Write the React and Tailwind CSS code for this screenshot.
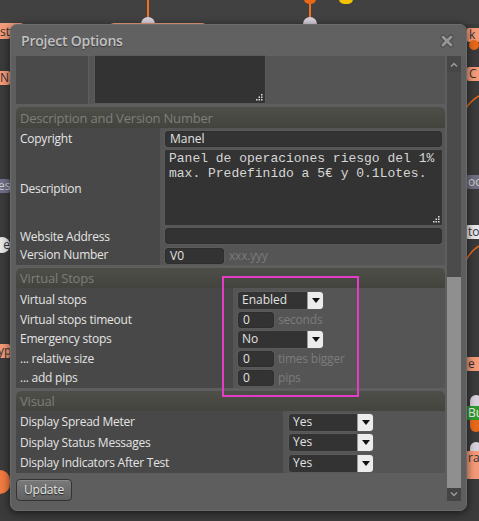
import React from "react";

const font = { fontFamily: '"Open Sans", "Noto Sans", sans-serif' };

function Tag({ className, children }) {
  return (
    <div
      className={
        "absolute text-[12px] leading-[14px] px-[2px] rounded-[2px] overflow-hidden whitespace-nowrap " +
        className
      }
    >
      {children}
    </div>
  );
}

function Input({ value, className }) {
  return (
    <div
      className={
        "h-[16px] rounded-[3px] bg-[#333333] border border-[#2e2e2e] shadow-[0_0_0_1px_#5a5a5a] px-[4px] text-[12px] leading-[14px] text-[#e2e2e2] " +
        (className || "")
      }
    >
      {value}
    </div>
  );
}

function Select({ value, className }) {
  return (
    <div
      className={
        "h-[17px] flex rounded-[3px] bg-[#333333] shadow-[0_0_0_1px_#5a5a5a] " +
        (className || "")
      }
    >
      <div className="flex-1 px-[4px] text-[12px] leading-[16px] text-[#e2e2e2]">
        {value}
      </div>
      <div className="w-[16px] h-[17px] bg-[#ececec] rounded-r-[3px] border-l border-[#999] flex items-center justify-center">
        <svg width="8" height="5" viewBox="0 0 8 5">
          <path d="M0 0h8L4 5z" fill="#111" />
        </svg>
      </div>
    </div>
  );
}

function Label({ children }) {
  return (
    <div className="px-[4px] text-[12px] leading-[16px] tracking-[-0.25px] text-[#e4e4e4] flex items-center">
      {children}
    </div>
  );
}

function Section({ title, tall, children }) {
  return (
    <div className="rounded-t-[5px] overflow-hidden">
      <div
        className={
          "bg-gradient-to-b from-[#4e4e49] to-[#44443f] px-[4px] text-[13px] tracking-[-0.2px] text-[#7e7e7a] " +
          (tall ? "h-[21px] leading-[22px]" : "h-[20px] leading-[20px]")
        }
      >
        {title}
      </div>
      {children}
    </div>
  );
}

export default function App() {
  return (
    <div
      className="relative w-[479px] h-[521px] overflow-hidden bg-[#3b3b3b]"
      style={font}
    >
      {/* canvas behind */}
      <div className="absolute left-0 top-0 w-[479px] h-[24px] bg-[#414141]" />
      <div className="absolute left-[147px] top-0 w-[2px] h-[20px] bg-[#f07020]" />
      <div className="absolute left-[141px] top-[17px] w-[14px] h-[10px] rounded-t-full bg-[#d8d0dc]" />
      <div className="absolute left-[309px] top-0 w-[2px] h-[20px] bg-[#f07020]" />
      <div className="absolute left-[304px] top-[-6px] w-[12px] h-[10px] rounded-full bg-[#e86818]" />
      <div className="absolute left-[303px] top-[17px] w-[14px] h-[10px] rounded-t-full bg-[#d8d0dc]" />
      <div className="absolute left-[339px] top-[-6px] w-[14px] h-[10px] rounded-full bg-[#f2c200]" />
      <div className="absolute left-[108px] top-[23px] w-[100px] h-[6px] rounded-t-[6px] bg-[#f0a080]" />
      <div className="absolute left-0 top-[23px] w-[26px] h-[6px] rounded-tr-[6px] bg-[#f0a080]" />
      <Tag className="left-[-2px] top-[25px] w-[12px] bg-[#f49a78] text-[#333]">sta</Tag>
      <Tag className="left-[-2px] top-[71px] w-[12px] bg-[#f49a78] text-[#333]">Na</Tag>
      <Tag className="left-[-4px] top-[179px] w-[14px] bg-[#6e6e88] text-[#ccc]">es</Tag>
      <div className="absolute left-[-6px] top-[237px] w-[16px] h-[16px] rounded-full bg-[#e6e6e6] text-[12px] leading-[16px] text-right text-[#333]">e</div>
      <Tag className="left-[-4px] top-[344px] w-[14px] bg-[#f49a78] text-[#333]">yp</Tag>
      <div className="absolute left-[-10px] top-[470px] w-[20px] h-[24px] rounded-full bg-[#f07a40]" />
      <Tag className="left-[467px] top-[28px] w-[14px] bg-[#f49a78] text-[#333]">k I</Tag>
      <div className="absolute left-[469px] top-[40px] w-[10px] h-[10px] rounded-full bg-[#e86818]" />
      <Tag className="left-[467px] top-[67px] w-[14px] bg-[#f49a78] text-[#333]">C</Tag>
      <Tag className="left-[466px] top-[175px] w-[15px] bg-[#6e6e80] text-[#ccc]">oo</Tag>
      <Tag className="left-[466px] top-[225px] w-[15px] bg-[#e8e8e8] text-[#333]">to</Tag>
      <Tag className="left-[466px] top-[357px] w-[15px] bg-[#f49a78] text-[#333]">e</Tag>
      <div className="absolute left-[470px] top-[395px] w-[12px] h-[12px] rounded-t-full bg-[#d8d0dc]" />
      <Tag className="left-[466px] top-[406px] w-[15px] bg-[#2f9a30] text-[#eee]">Bu</Tag>
      <div className="absolute left-[470px] top-[420px] w-[12px] h-[12px] rounded-b-full bg-[#e86818]" />
      <div className="absolute left-[470px] top-[442px] w-[12px] h-[12px] rounded-t-full bg-[#d8d0dc]" />
      <Tag className="left-[466px] top-[451px] w-[15px] h-[28px] bg-[#f49a78] text-[#333] whitespace-normal">ra tn</Tag>
      <svg className="absolute left-[464px] top-[80px]" width="15" height="320" viewBox="0 0 15 320">
        <path d="M2 28 Q8 20 15 16" stroke="#e86818" fill="none" strokeWidth="1.5" />
        <path d="M2 180 Q8 170 15 166" stroke="#e86818" fill="none" strokeWidth="1.5" />
      </svg>

      {/* dialog window */}
      <div className="absolute left-[10px] top-[24px] w-[457px] h-[487px] rounded-[7px] bg-[#5e5e5e] border border-[#6c6c6c] shadow-[0_2px_8px_rgba(0,0,0,0.6)] flex flex-col">
        <div className="h-[31px] flex items-center justify-between pl-[10px] pr-[12px] bg-[#616161] rounded-t-[7px]">
          <div className="text-[14px] font-semibold tracking-[-0.2px] text-[#c2c2c2] [text-shadow:0_1px_1px_#3a3a3a]">
            Project Options
          </div>
          <svg width="14" height="14" viewBox="0 0 14 14">
            <path d="M3 3L11 11M11 3L3 11" stroke="#4a4a4a" strokeWidth="5" strokeLinecap="round" />
            <path d="M3 3L11 11M11 3L3 11" stroke="#959595" strokeWidth="3" strokeLinecap="round" />
          </svg>
        </div>

        <div className="flex pl-[5px] pr-[4px] gap-[2px] h-[445px]">
          <div className="w-[429px] flex flex-col gap-[3px]">
            {/* partially scrolled row */}
            <div className="h-[49px] flex">
              <div className="w-[72px] bg-[#4a4a4a]" />
              <div className="flex-1 bg-[#555555] pl-[6px] border-l border-[#5e5e5e]">
                <div className="relative w-[170px] h-[47px] bg-[#333333] shadow-[0_0_0_1px_#5a5a5a]">
                  <Grip />
                </div>
              </div>
            </div>

            <Section title="Description and Version Number" tall>
              <div className="grid grid-cols-[144px_1fr]">
                <div className="bg-[#484848] flex flex-col">
                  <div className="h-[21px] flex"><Label>Copyright</Label></div>
                  <div className="h-[79px] flex"><Label>Description</Label></div>
                  <div className="h-[17px] flex"><Label>Website Address</Label></div>
                  <div className="h-[19px] flex"><Label>Version Number</Label></div>
                </div>
                <div className="bg-[#555555] pl-[5px] pr-[3px] pt-[3px] pb-[1px] flex flex-col gap-[3px]">
                  <Input value="Manel" />
                  <div
                    className="relative h-[75px] bg-[#333333] shadow-[0_0_0_1px_#5a5a5a] px-[4px] pt-[1px] text-[13px] leading-[15px] text-[#d6d6d6]"
                    style={{ fontFamily: '"Liberation Mono", monospace' }}
                  >
                    Panel de operaciones riesgo del 1% max. Predefinido a 5€ y 0.1Lotes.
                    <Grip />
                  </div>
                  <Input value="" />
                  <div className="flex items-center gap-[5px]">
                    <Input value="V0" className="w-[59px]" />
                    <span className="text-[12px] tracking-[-0.2px] text-[#7a7a7a]">xxx.yyy</span>
                  </div>
                </div>
              </div>
            </Section>

            <Section title="Virtual Stops">
              <div className="grid grid-cols-[217px_1fr]">
                <div className="bg-[#484848] flex flex-col pt-[3px] pb-[1px]">
                  {["Virtual stops", "Virtual stops timeout", "Emergency stops", "... relative size", "... add pips"].map((t) => (
                    <div key={t} className="h-[19.5px] flex"><Label>{t}</Label></div>
                  ))}
                </div>
                <div className="bg-[#555555] pl-[5px] pt-[4px] pb-[2px] flex flex-col gap-[3px]">
                  <Select value="Enabled" className="w-[85px]" />
                  <Suffix unit="seconds" />
                  <Select value="No" className="w-[85px]" />
                  <Suffix unit="times bigger" />
                  <Suffix unit="pips" />
                </div>
              </div>
            </Section>

            <Section title="Visual">
              <div className="grid grid-cols-[267px_1fr]">
                <div className="bg-[#484848] flex flex-col pt-[1px]">
                  {["Display Spread Meter", "Display Status Messages", "Display Indicators After Test"].map((t) => (
                    <div key={t} className="h-[20.5px] flex"><Label>{t}</Label></div>
                  ))}
                </div>
                <div className="bg-[#555555] pl-[6px] pt-[3px] pb-[2px] flex flex-col gap-[3.5px]">
                  <Select value="Yes" className="w-[84px]" />
                  <Select value="Yes" className="w-[84px]" />
                  <Select value="Yes" className="w-[84px]" />
                </div>
              </div>
            </Section>

            <div>
              <button className="h-[22px] px-[7px] rounded-[4px] border border-[#333] bg-gradient-to-b from-[#7a7a7a] to-[#616161] text-[12px] tracking-[-0.2px] text-[#e6e6e6] [text-shadow:0_1px_1px_#222] shadow-[inset_0_1px_0_#8c8c8c]">
                Update
              </button>
            </div>
          </div>

          {/* scrollbar */}
          <div className="w-[14px] flex flex-col bg-[#4b4b4b]">
            <div className="h-[16px] flex items-center justify-center bg-[#474747]">
              <svg width="8" height="5" viewBox="0 0 8 5">
                <path d="M1 4.5L4 1.5L7 4.5" stroke="#9a9a9a" strokeWidth="1.5" fill="none" />
              </svg>
            </div>
            <div className="h-[205px]" />
            <div className="flex-1 bg-[#8f8f8f]" />
            <div className="h-[13px] flex items-center justify-center bg-[#444444]">
              <svg width="8" height="5" viewBox="0 0 8 5">
                <path d="M1 0.5L4 3.5L7 0.5" stroke="#9a9a9a" strokeWidth="1.5" fill="none" />
              </svg>
            </div>
          </div>
        </div>
      </div>

      {/* highlight rectangle */}
      <div className="absolute left-[222px] top-[276px] w-[137px] h-[121px] border-2 border-[#e43cc6]" />
    </div>
  );
}

function Suffix({ unit }) {
  return (
    <div className="flex items-center gap-[4px]">
      <Input value="0" className="w-[36px]" />
      <span className="text-[12px] leading-[14px] tracking-[-0.2px] text-[#7c7c7c]">{unit}</span>
    </div>
  );
}

function Grip() {
  return (
    <svg className="absolute right-[2px] bottom-[2px]" width="7" height="7" viewBox="0 0 7 7">
      <rect x="5" y="0" width="1.5" height="1.5" fill="#ddd" />
      <rect x="5" y="2.5" width="1.5" height="1.5" fill="#ddd" />
      <rect x="2.5" y="2.5" width="1.5" height="1.5" fill="#ddd" />
      <rect x="5" y="5" width="1.5" height="1.5" fill="#ddd" />
      <rect x="2.5" y="5" width="1.5" height="1.5" fill="#ddd" />
      <rect x="0" y="5" width="1.5" height="1.5" fill="#ddd" />
    </svg>
  );
}
